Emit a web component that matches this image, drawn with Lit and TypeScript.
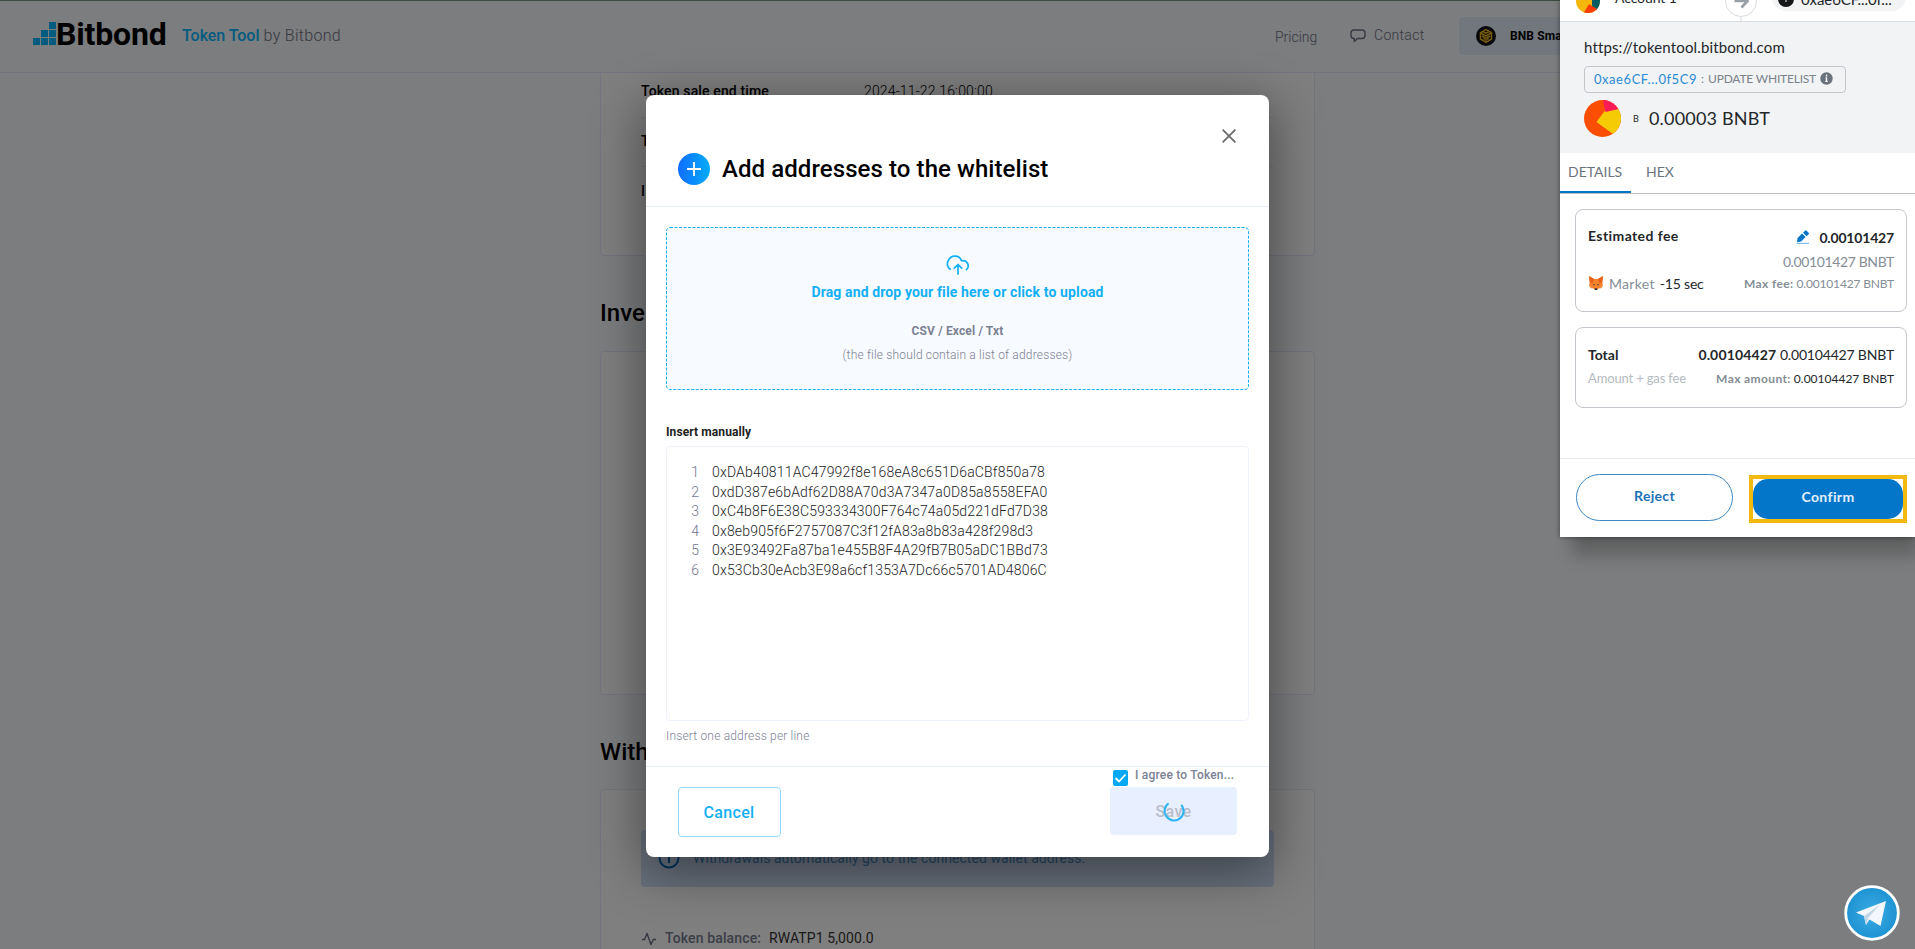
import { LitElement, html, css, svg } from "lit";
import { customElement } from "lit/decorators.js";

const ADDRESSES = [
  "0xDAb40811AC47992f8e168eA8c651D6aCBf850a78",
  "0xdD387e6bAdf62D88A70d3A7347a0D85a8558EFA0",
  "0xC4b8F6E38C593334300F764c74a05d221dFd7D38",
  "0x8eb905f6F2757087C3f12fA83a8b83a428f298d3",
  "0x3E93492Fa87ba1e455B8F4A29fB7B05aDC1BBd73",
  "0x53Cb30eAcb3E98a6cf1353A7Dc66c5701AD4806C",
];

@customElement("page-header")
class PageHeader extends LitElement {
  static styles = css`
    :host { display: flex; box-sizing: border-box; height: 73px; border-top: 1px solid #7b9480; border-bottom: 1px solid #e7e9fb; padding-left: 33px; background: #f9fafc; color: #6f7285; }
    .logo { display: block; width: 23px; height: 23px; margin-top: 21px; }
    .brand { font-weight: 700; font-size: 32px; line-height: 38px; letter-spacing: -0.15px; margin: 14px 0 0 -1px; color: #000; width: 126px; padding-left: 1px; }
    .sub { font-weight: 300; font-size: 16px; line-height: 24px; margin-top: 23px; letter-spacing: 0.3px; white-space: pre; }
    .sub b { font-weight: 500; color: #06b8ff; letter-spacing: -0.05px; }
    .nav { margin-left: auto; display: flex; font-size: 14px; font-weight: 300; line-height: 24px; }
    .pricing { width: 75px; padding-top: 24px; }
    .contact { display: flex; width: 109px; padding-top: 22px; gap: 8px; letter-spacing: 0.3px; }
    .contact svg { margin-top: 6px; width: 16px; height: 14px; }
    .net { display: flex; align-items: center; width: 456px; height: 38px; margin-top: 16px; border-radius: 4px; background: #e4effd; color: #000; font-weight: 700; font-size: 12px; letter-spacing: 0.1px; gap: 14px; }
    .net svg { width: 20px; height: 20px; margin-left: 17px; }
  `;
  render() {
    return html`
      <svg class="logo" viewBox="0 0 23 23" fill="#06b8ff">
        <path d="M0 16h7v7H0zM8 16h7v7H8zM16 16h7v7h-7zM8 8h7v7H8zM16 8h7v7h-7zM16 0h7v7h-7z" />
      </svg>
      <div class="brand">Bitbond</div>
      <div class="sub"><b>Token Tool</b> by Bitbond</div>
      <div class="nav">
        <span class="pricing">Pricing</span>
        <span class="contact">
          <svg viewBox="0 0 16 14" fill="none" stroke="#6f7285" stroke-width="1.4" stroke-linejoin="round">
            <path d="M4 1h8q3 0 3 3v2.500q0 3-3 3H7.500L4.300 12.600V9.500H4q-3 0-3-3V4q0-3 3-3z" />
          </svg>Contact</span>
        <span class="net">
          <svg viewBox="0 0 20 20">
            <circle cx="10" cy="10" r="10" fill="#101014" />
            <g fill="none" stroke="#e9b416" stroke-width="1.500">
              <path d="M10 3.600l5.500 3v6.400L10 16.300 4.500 13V6.600z" />
              <path d="M5 7l5 2.800L15 7M10 9.800v6M7 5.500l3 1.700 3-1.700M6 10l2.200 1.300v2.500M14 10l-2.200 1.300v2.500" />
            </g>
          </svg>BNB Sma</span>
      </div>`;
  }
}

@customElement("sale-page")
class SalePage extends LitElement {
  static styles = css`
    :host { display: block; width: 715px; margin: 0 auto; color: #000; }
    .card { box-sizing: border-box; border: 1px solid #e7e9fb; border-radius: 4px; background: #fff; padding: 0 40px; }
    .details { height: 183px; border-top: 0; border-radius: 0 0 4px 4px; }
    .blank { height: 344px; }
    .withdraw { height: 180px; padding-top: 40px; }
    .row { display: grid; grid-template-columns: 223px 1fr; font-size: 14px; border-bottom: 1px solid #eceef8; }
    .row b { font-weight: 500; letter-spacing: 0.14px; }
    .row span { font-weight: 300; letter-spacing: 0.15px; }
    .first { line-height: 37px; height: 44px; }
    .mid { line-height: 47px; height: 48px; }
    .last { border: 0; line-height: 49px; }
    h2 { box-sizing: border-box; height: 95px; margin: 0; padding-top: 45px; font-weight: 500; font-size: 24px; line-height: 24px; }
    .second { height: 94px; }
    .alert { display: flex; align-items: center; box-sizing: border-box; height: 57px; border-radius: 4px; background: #d3e2fb; color: #4a8fc6; font-size: 14px; letter-spacing: 0.05px; padding: 0 0 2px 17px; gap: 13px; }
    .alert svg { width: 22px; height: 22px; }
    .balance { display: flex; align-items: center; height: 24px; margin-top: 39px; font-size: 14px; }
    .balance svg { width: 14px; height: 14px; margin: 2px 9px 0 1px; }
    .balance b { font-weight: 500; letter-spacing: 0.13px; color: #787c8e; width: 104px; }
    .balance span { font-weight: 400; letter-spacing: 0.1px; color: #333; }
  `;
  render() {
    return html`
      <section class="card details">
        <div class="row first"><b>Token sale end time</b><span>2024-11-22 16:00:00</span></div>
        <div class="row mid"><b>T</b></div>
        <div class="row mid last"><b>I</b></div>
      </section>
      <h2>Inve</h2>
      <section class="card blank"></section>
      <h2 class="second">With</h2>
      <section class="card withdraw">
        <div class="alert">
          <svg viewBox="0 0 22 22" fill="none" stroke="#0b6fbd" stroke-width="2">
            <circle cx="11" cy="11" r="9.500" /><path d="M11 10v6M11 6v2" />
          </svg>
          Withdrawals automatically go to the connected wallet address.
        </div>
        <div class="balance">
          <svg viewBox="0 0 14 14" fill="none" stroke="#6c7082" stroke-width="1.400" stroke-linejoin="round">
            <path d="M0 7.500h2.600L5 1.500l4 11 2.300-5H14" />
          </svg>
          <b>Token balance:</b><span>RWATP1 5,000.0</span>
        </div>
      </section>`;
  }
}

@customElement("whitelist-dialog")
class WhitelistDialog extends LitElement {
  static styles = css`
    :host { display: flex; flex-direction: column; box-sizing: border-box; width: 623px; height: 762px; border-radius: 8px; background: #fff; color: #000; box-shadow: 0 12px 50px 4px rgba(0, 0, 0, 0.42); }
    header { box-sizing: border-box; height: 112px; border-bottom: 1px solid #e8eeff; padding: 34px 33px 0 32px; }
    .close { display: block; width: 14px; height: 14px; margin: 0 0 0 auto; }
    .title { display: flex; align-items: center; gap: 12px; height: 32px; margin-top: 10px; font-weight: 500; font-size: 24px; letter-spacing: 0.08px; }
    .title svg { width: 32px; height: 32px; }
    main { box-sizing: border-box; height: 559px; padding: 20px 20px 0; }
    .drop { box-sizing: border-box; display: flex; flex-direction: column; align-items: center; height: 163px; border-radius: 4px; background: #f7faff; padding-top: 28px; position: relative; }
    .drop .dash { position: absolute; inset: 0; width: 100%; height: 100%; }
    .cloud { width: 24px; height: 20px; }
    .drop strong { font-weight: 700; font-size: 14px; line-height: 20px; letter-spacing: 0.13px; color: #13b0f5; margin-top: 7px; }
    .kinds { font-weight: 700; font-size: 12px; line-height: 20px; letter-spacing: 0.15px; color: #7c8194; margin-top: 19px; }
    .hint { font-weight: 300; font-size: 12px; line-height: 20px; letter-spacing: 0.18px; color: #7d8194; margin-top: 4px; }
    .label { font-weight: 700; font-size: 12px; line-height: 21px; letter-spacing: 0.1px; color: #222; margin-top: 32px; }
    .area { box-sizing: border-box; height: 275px; margin: 3px 0 5px; border: 1px solid #eef2ff; border-radius: 4px; padding: 16px 0 0 12px; font-size: 14px; line-height: 19.6px; }
    .line { display: grid; grid-template-columns: 20px 1fr; column-gap: 13px; }
    .line i { font-style: normal; font-weight: 300; text-align: right; color: #6f7690; }
    .line span { font-weight: 300; letter-spacing: 0.17px; color: #1d1d1f; }
    footer { display: flex; justify-content: space-between; border-top: 1px solid #e8eeff; padding: 0 32px; font-weight: 500; font-size: 16px; }
    .cancel { box-sizing: border-box; width: 103px; height: 50px; margin-top: 20px; border: 1px solid #8fdcff; border-radius: 4px; display: grid; place-items: center; color: #13b0f5; letter-spacing: 0.34px; padding-right: 1px; }
    .right { width: 127px; }
    .agree { display: flex; align-items: center; gap: 7px; height: 19px; padding: 0 0 1px 3px; font-size: 12px; line-height: 16px; letter-spacing: 0.2px; color: #7c8194; white-space: nowrap; }
    .agree svg { width: 15px; height: 16px; margin-top: 2px; }
    .agree span { padding-bottom: 3px; }
    .save { height: 48px; border-radius: 4px; background: #e8efff; display: grid; place-items: center; color: #b9bdca; letter-spacing: 0.3px; }
    .save > * { grid-area: 1 / 1; }
    .save svg { width: 22px; height: 22px; }
  `;
  render() {
    return html`
      <header>
        <svg class="close" viewBox="0 0 14 14" stroke="#6a6a6a" stroke-width="1.800"><path d="M.6.600l12.800 12.800M13.400.600L.6 13.400" /></svg>
        <div class="title">
          <svg viewBox="0 0 32 32">
            <defs><linearGradient id="g"><stop offset="0" stop-color="#0f6dff" /><stop offset="1" stop-color="#06adf8" /></linearGradient></defs>
            <circle cx="16" cy="16" r="16" fill="url(#g)" />
            <path d="M16 9v14M9 16h14" stroke="#fff" stroke-width="1.800" />
          </svg>
          Add addresses to the whitelist
        </div>
      </header>
      <main>
        <div class="drop">
          <svg class="dash"><rect x="0.500" y="0.500" width="582" height="162" rx="3.500" fill="none" stroke="#13b0f5" stroke-dasharray="3 1.500" /></svg>
          <svg class="cloud" viewBox="0 0 24 20" fill="none" stroke="#13b0f5" stroke-width="1.700" stroke-linecap="round" stroke-linejoin="round">
            <path d="M4.200 14.200A6.200 6.200 0 0 1 2.400 5.500 7 7 0 0 1 15.500 5.800 5.200 5.200 0 0 1 20.500 14.600M12 19V9.800M8.300 13.200L12 9.500l3.700 3.700" />
          </svg>
          <strong>Drag and drop your file here or click to upload</strong>
          <span class="kinds">CSV / Excel / Txt</span>
          <span class="hint">(the file should contain a list of addresses)</span>
        </div>
        <div class="label">Insert manually</div>
        <div class="area">${ADDRESSES.map((a, i) => html`<div class="line"><i>${i + 1}</i><span>${a}</span></div>`)}</div>
        <div class="hint">Insert one address per line</div>
      </main>
      <footer>
        <div class="cancel">Cancel</div>
        <div class="right">
          <div class="agree">
            <svg viewBox="0 0 15 16"><rect width="15" height="16" rx="2" fill="#03a9f4" /><path d="M2.500 8l3.500 3.500 6.500-7" fill="none" stroke="#fff" stroke-width="1.800" /></svg>
            <span>I agree to Token...</span>
          </div>
          <div class="save">
            <span>Save</span>
            <svg viewBox="0 0 22 22" fill="none" stroke="#2cb5f5" stroke-width="2"><path d="M5.600 3.200A9.500 9.500 0 1 0 18.300 4.800" /></svg>
          </div>
        </div>
      </footer>`;
  }
}

const fox = svg`
  <path d="M0 0l5.500 3.300h4L15 0l-.8 7 .8 3-2 3-3 .3L8.600 15H6.400L5 13.300 2 13 0 10l.8-3z" fill="#f5822c" />
  <path d="M0 0l5.500 3.300L4 7.500.8 7zM15 0L9.500 3.300 11 7.500l3.200-.5z" fill="#e8611c" />
  <path d="M4.500 8.500l2 1-1.700.7zM10.500 8.500l-2 1 1.700.700zM6.400 13h2.200l.4 1.200L8.600 15H6.400L6 14.200z" fill="#2b2f45" />`;

@customElement("wallet-popup")
class WalletPopup extends LitElement {
  static styles = css`
    :host { display: block; box-sizing: border-box; width: 355px; height: 537px; background: #fff; color: #24272a; font-family: Lato, sans-serif; font-size: 14px; box-shadow: 8px 22px 16px -4px rgba(0, 0, 0, 0.24), 0 0 5px rgba(0, 0, 0, 0.45); white-space: nowrap; }
    svg { display: block; flex: none; }
    .accounts { box-sizing: border-box; display: flex; height: 22px; overflow: hidden; border-bottom: 1px solid #d9dce0; }
    .id { width: 24px; height: 24px; margin: -11px 0 0 16px; }
    .name { width: 110px; margin: -12px 0 0 15px; line-height: 20px; letter-spacing: -0.1px; }
    .arrow { width: 32px; height: 38px; margin: -15px 15px 0 0; }
    .pill { box-sizing: border-box; display: flex; align-items: center; gap: 7px; width: 134px; height: 28px; margin-top: -17px; padding: 3px 0 0 6px; border-radius: 14px; background: #f2f3f4; font-size: 15px; letter-spacing: -0.1px; }
    .pill svg { width: 16px; height: 16px; }
    .origin { box-sizing: border-box; height: 131px; background: #f2f3f5; padding: 15px 0 0 24px; }
    .url { font-size: 15px; line-height: 20px; letter-spacing: 0.14px; }
    .chip { box-sizing: border-box; display: flex; align-items: center; width: 262px; height: 27px; margin-top: 9px; border: 1px solid #c3c7cc; border-radius: 4px; padding: 0 0 2px 9px; font-size: 12px; letter-spacing: -0.2px; color: #7b828a; }
    .chip b { font-weight: 400; font-size: 13px; letter-spacing: 0.55px; color: #2b8bd6; width: 107px; }
    .chip span { width: 7px; }
    .chip svg { width: 13px; height: 13px; margin-left: 4px; }
    .sum { display: flex; align-items: center; margin-top: 6px; font-size: 18px; letter-spacing: 0.18px; height: 38px; }
    .sum svg { width: 37px; height: 37px; margin-top: 1px; }
    .sum small { font-size: 9px; width: 16px; margin-left: 12px; }
    .tabs { box-sizing: border-box; display: flex; height: 41px; border-bottom: 1px solid #bbc0c5; color: #6a737d; line-height: 38px; }
    .tab { height: 38px; }
    .tab.on { width: 62px; padding-left: 8px; padding-right: 1px; border-bottom: 2px solid #0376c9; margin-right: 15px; }
    .box { box-sizing: border-box; margin: 0 8px 0 15px; border: 1px solid #c3c7cc; border-radius: 8px; padding: 0 12px; }
    .fee { height: 103px; margin-top: 15px; padding-top: 15px; }
    .total { height: 81px; margin-top: 15px; padding-top: 14px; }
    .r { display: flex; justify-content: space-between; align-items: center; height: 24px; }
    .low { height: 20px; padding-bottom: 1px; }
    .g { display: flex; align-items: center; }
    .semi { font-weight: 700; }
    .est { letter-spacing: 0.41px; margin-top: -4px; }
    .muted { color: #858d96; }
    .dim { color: #b4bac1; font-size: 13px; letter-spacing: -0.15px; }
    .s { font-size: 12px; }
    .wide { letter-spacing: 0.15px; }
    .tight { letter-spacing: -0.38px; }
    .mid { letter-spacing: -0.18px; }
    .market { letter-spacing: 0.3px; margin-right: 5px; }
    .label { letter-spacing: 0.38px; }
    .pen { width: 13px; height: 14px; margin-right: 10px; }
    .fox { width: 14px; height: 14px; margin: 0 6px 0 1px; }
    .actions { box-sizing: border-box; display: flex; border-top: 1px solid #e6e8ea; height: 79px; margin-top: 50px; padding: 15px 8px 0 16px; }
    .reject { box-sizing: border-box; width: 157px; height: 47px; border: 1px solid #3d88c4; border-radius: 24px; display: grid; place-items: center; padding-bottom: 5px; color: #1a72b5; font-weight: 700; letter-spacing: 0.3px; }
    .mark { box-sizing: border-box; width: 158px; height: 48px; margin: 1px 0 0 16px; border: 4px solid #f2b90f; }
    .confirm { height: 40px; border-radius: 15px; background: #0376c9; display: grid; place-items: center; padding-bottom: 6px; box-sizing: border-box; color: #e4f1fb; font-weight: 700; letter-spacing: 0.39px; }
  `;
  render() {
    return html`
      <div class="accounts">
        <svg class="id" viewBox="0 0 24 24"><clipPath id="c"><circle cx="12" cy="12" r="12" /></clipPath><g clip-path="url(#c)"><path d="M0 0h24v24H0z" fill="#f6b70c" /><path d="M16 0h8v24l-8-5z" fill="#045c62" /><path d="M13 15l8 5-3 5H7z" fill="#f93c0a" /></g></svg>
        <span class="name">Account 1</span>
        <svg class="arrow" viewBox="0 0 32 38" fill="none"><path d="M16 32v6" stroke="#d9dce0" /><circle cx="16" cy="16" r="15.500" fill="#fff" stroke="#d9dce0" /><path d="M9.500 16h12M16.500 9.500l6 6.500-6 6.500" stroke="#9aa0a8" stroke-width="2.600" /></svg>
        <span class="pill"><svg viewBox="0 0 16 16"><circle cx="8" cy="8" r="8" fill="#141618" /><path d="M8 7v4" stroke="#aaa" stroke-width="1.500" /></svg>0xae6CF...0f...</span>
      </div>
      <div class="origin">
        <div class="url">https://tokentool.bitbond.com</div>
        <div class="chip"><b>0xae6CF...0f5C9</b><span>:</span>UPDATE WHITELIST
          <svg viewBox="0 0 13 13"><circle cx="6.500" cy="6.500" r="6.200" fill="#6a737d" /><path d="M6.500 5.600v4M5.300 9.400h2.400M5.500 5.800h1M6.500 2.800v1.600" stroke="#fff" stroke-width="1.300" /></svg>
        </div>
        <div class="sum">
          <svg viewBox="0 0 37 37"><clipPath id="d"><circle cx="18.500" cy="18.500" r="18.500" /></clipPath><g clip-path="url(#d)"><path d="M0 0h37v37H0z" fill="#fb4e03" /><path d="M12.500 22L21 10.500l16-4V37l-8-3z" fill="#f5cb05" /><path d="M18.500-2L21.500 12 37 8.500V-2z" fill="#fb1b56" /></g></svg>
          <small>B</small>0.00003 BNBT
        </div>
      </div>
      <div class="tabs"><span class="tab on">DETAILS</span><span class="tab">HEX</span></div>
      <section class="box fee">
        <div class="r"><span class="semi est">Estimated fee</span>
          <span class="g"><svg class="pen" viewBox="0 0 13 14"><path d="M1 12.200l.600-4.200L6 3.500l3.600 3.600-4.400 4.400zM7 2.700L9 .700q.8-.8 1.600 0l2 2q.8.800 0 1.600l-2 2z" fill="#0376c9" /><path d="M.5 13.400H13" stroke="#6fb2e2" /></svg><b class="mid">0.00101427</b></span></div>
        <div class="r muted"><span></span><span class="tight">0.00101427 BNBT</span></div>
        <div class="r low"><span class="g"><svg class="fox" viewBox="0 0 15 15">${fox}</svg><span class="muted market">Market</span><span class="mid">-15 sec</span></span>
          <span class="s muted"><b class="label">Max fee:</b> <span class="mid">0.00101427 BNBT</span></span></div>
      </section>
      <section class="box total">
        <div class="r"><span class="semi">Total</span><span><b class="wide">0.00104427</b> <span class="mid">0.00104427 BNBT</span></span></div>
        <div class="r"><span class="dim">Amount + gas fee</span><span class="s"><b class="muted label">Max amount:</b> <span>0.00104427 BNBT</span></span></div>
      </section>
      <div class="actions">
        <div class="reject">Reject</div>
        <div class="mark"><div class="confirm">Confirm</div></div>
      </div>`;
  }
}

@customElement("app-root")
class AppRoot extends LitElement {
  static styles = css`
    :host { display: block; position: relative; width: 100%; height: 100vh; overflow: hidden; background: #f9fafd; font-family: Roboto, sans-serif; }
    .shade { position: absolute; inset: 0; background: rgba(0, 0, 0, 0.5); }
    .dialog { position: absolute; left: 646px; top: 95px; }
    .wallet { position: absolute; right: 0; top: 0; }
    .chat { position: absolute; right: 15px; bottom: 8px; width: 56px; height: 56px; }
  `;
  render() {
    return html`
      <page-header></page-header>
      <sale-page></sale-page>
      <div class="shade"></div>
      <whitelist-dialog class="dialog"></whitelist-dialog>
      <wallet-popup class="wallet"></wallet-popup>
      <svg class="chat" viewBox="0 0 56 56">
        <defs><radialGradient id="t"><stop offset="0" stop-color="#3aabe4" /><stop offset="1" stop-color="#1e93d2" /></radialGradient></defs>
        <circle cx="28" cy="28" r="26.300" fill="url(#t)" stroke="#fff" stroke-width="2.800" />
        <path d="M12 27.500L42 16l-5.500 25-11-6.500-3.500 5.500-2-9z" fill="#f4f8fc" />
        <path d="M20 31.200L36 19.500 24.500 32.500 22 40z" fill="#c3d6e6" />
      </svg>`;
  }
}
